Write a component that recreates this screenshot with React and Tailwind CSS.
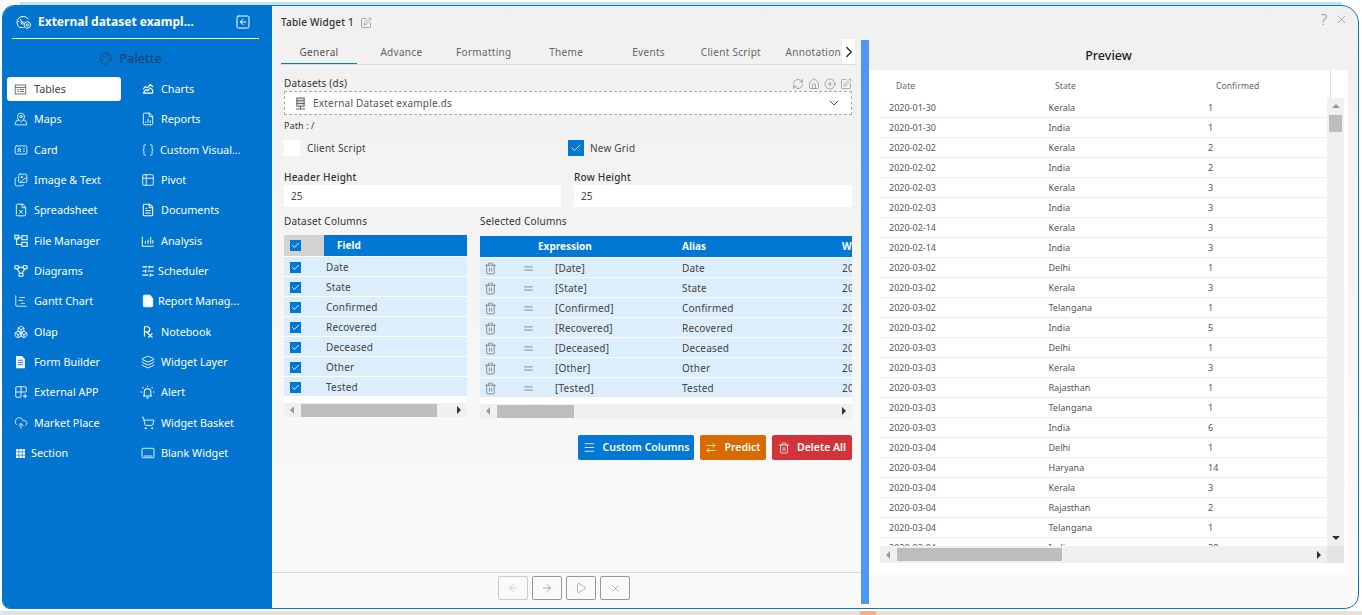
import {
  Boxes, Braces, ChevronDown, ChevronRight, ChartGantt, CloudUpload, FileChartColumn, FileX, FileText,
  Equal, Layers, MapPinned, Menu, Palette, Play, RefreshCw, House, CirclePlus, SquarePen, SquareArrowLeft,
  ArrowLeft, ArrowRight, ArrowRightLeft, Check, Trash2, X, SlidersHorizontal, ShoppingCart,
  Grid2x2Plus, File, IdCard, Images, Table2,
} from "lucide-react";
import { TbPrescription, TbChartAreaLine } from "react-icons/tb";

const FONT = "font-['Noto_Sans',sans-serif]";

const TablesIcon = () => (
  <svg viewBox="0 0 16 16" className="w-[13px] h-[13px]" fill="none" stroke="#555" strokeWidth="1">
    <rect x="1.5" y="2.5" width="13" height="11" />
    <path d="M1.5 5.5h13M4 8h2M4 10.5h2M7.5 8h5M7.5 10.5h5" />
  </svg>
);

const SectionIcon = () => (
  <svg viewBox="0 0 12 12" className="w-[9px] h-[9px]" fill="#fff">
    {[0, 4.3, 8.6].map((y) =>
      [0, 4.3, 8.6].map((x) => <rect key={`${x}-${y}`} x={x} y={y} width="3.4" height="3.4" />)
    )}
  </svg>
);

const BlankIcon = () => (
  <svg viewBox="0 0 16 14" className="w-[14px] h-[12px]" fill="none" stroke="#fff" strokeWidth="1">
    <rect x="1" y="1.5" width="14" height="11" rx="1" />
    <path d="M3 10.5h10" />
  </svg>
);

const GaugeGear = () => (
  <svg viewBox="0 0 20 18" className="w-[17px] h-[16px]" fill="none" stroke="#fff" strokeWidth="1.1">
    <path d="M10 15.5H5.5A7.2 7.2 0 1 1 15.8 6" />
    <path d="M8.5 2v2M3 8.5h2M8.5 9.5 6 5.5" />
    <circle cx="8.5" cy="10" r="1.4" />
    <circle cx="14.5" cy="12.5" r="3.8" />
    <circle cx="14.5" cy="12.5" r="1.3" />
  </svg>
);

const TreeIcon = () => (
  <svg viewBox="0 0 16 16" className="w-[14px] h-[14px]" fill="none" stroke="#fff" strokeWidth="1.2">
    <rect x="1" y="1.5" width="4.5" height="4" />
    <rect x="9" y="2" width="6" height="4.5" />
    <rect x="9" y="9.5" width="6" height="4.5" />
    <path d="M3 5.5v6.5h6M3 4.2h6" />
  </svg>
);

const DiagramIcon = () => (
  <svg viewBox="0 0 16 16" className="w-[14px] h-[14px]" fill="none" stroke="#fff" strokeWidth="1.2">
    <rect x="1" y="2" width="4.5" height="3.5" rx="0.5" />
    <rect x="10.5" y="2" width="4.5" height="3.5" rx="0.5" />
    <rect x="5.8" y="10.5" width="4.5" height="3.5" rx="0.5" />
    <path d="M5.5 3.7h5M3.3 5.5l3.6 5M12.7 5.5l-3.6 5" />
  </svg>
);

const AnalysisIcon = () => (
  <svg viewBox="0 0 16 16" className="w-[14px] h-[14px]" fill="none" stroke="#fff" strokeWidth="1.1">
    <path d="M1.5 3v11h13" />
    <path d="M5 11V8M8 11V6.5M11 11V3.5M13.5 11V7" />
  </svg>
);

const BellIcon = () => (
  <svg viewBox="0 0 16 16" className="w-[15px] h-[15px]" fill="none" stroke="#fff" strokeWidth="1.1">
    <path d="M4.5 11.5V7.5a3.5 3.5 0 0 1 7 0v4M3.2 11.8h9.6M6.6 13.8h2.8" />
    <path d="M8 .7v1.5M2.6 2.4l1 1.1M13.4 2.4l-1 1.1M.6 7.5h1.6M13.8 7.5h1.6" />
  </svg>
);

const FormIcon = () => (
  <svg viewBox="0 0 14 16" className="w-[13px] h-[14px]">
    <path d="M2 1h6.5L12 4.5V15H2z" fill="#fff" />
    <path d="M4 6h6M4 8.5h6M4 11h6" stroke="#0074cf" strokeWidth="1" />
  </svg>
);

const ic = "w-[14px] h-[14px]";
const paletteRows = [
  [["Tables", <TablesIcon />, true], ["Charts", <TbChartAreaLine className={ic} />]],
  [["Maps", <MapPinned className={ic} strokeWidth={1.4} />], ["Reports", <FileChartColumn className={ic} strokeWidth={1.6} />]],
  [["Card", <IdCard className={ic} strokeWidth={1.4} />], ["Custom Visual...", <Braces className={ic} strokeWidth={1.4} />, false, -1]],
  [["Image & Text", <Images className={ic} strokeWidth={1.4} />], ["Pivot", <Table2 className={ic} strokeWidth={1.4} />]],
  [["Spreadsheet", <FileX className={ic} strokeWidth={1.6} />], ["Documents", <FileText className={ic} strokeWidth={1.8} />]],
  [["File Manager", <TreeIcon />], ["Analysis", <AnalysisIcon />]],
  [["Diagrams", <DiagramIcon />], ["Scheduler", <SlidersHorizontal className={ic} strokeWidth={2} />, false, -3]],
  [["Gantt Chart", <ChartGantt className={ic} strokeWidth={1.4} />], ["Report Manag...", <File className={ic} fill="#fff" strokeWidth={1.4} />, false, -3]],
  [["Olap", <Boxes className={ic} strokeWidth={1.5} />], ["Notebook", <TbPrescription className={ic} />]],
  [["Form Builder", <FormIcon />], ["Widget Layer", <Layers className={ic} strokeWidth={1.6} />]],
  [["External APP", <Grid2x2Plus className={ic} strokeWidth={1.5} />], ["Alert", <BellIcon />]],
  [["Market Place", <CloudUpload className={ic} strokeWidth={1.4} />], ["Widget Basket", <ShoppingCart className={ic} strokeWidth={1.5} />]],
  [["Section", <SectionIcon />, false, -3], ["Blank Widget", <BlankIcon />]],
];

const tabs = ["General", "Advance", "Formatting", "Theme", "Events", "Client Script", "Annotation"];
const fields = ["Date", "State", "Confirmed", "Recovered", "Deceased", "Other", "Tested"];

const previewRows = [
  ["2020-01-30", "Kerala", "1"], ["2020-01-30", "India", "1"], ["2020-02-02", "Kerala", "2"], ["2020-02-02", "India", "2"],
  ["2020-02-03", "Kerala", "3"], ["2020-02-03", "India", "3"], ["2020-02-14", "Kerala", "3"], ["2020-02-14", "India", "3"],
  ["2020-03-02", "Delhi", "1"], ["2020-03-02", "Kerala", "3"], ["2020-03-02", "Telangana", "1"], ["2020-03-02", "India", "5"],
  ["2020-03-03", "Delhi", "1"], ["2020-03-03", "Kerala", "3"], ["2020-03-03", "Rajasthan", "1"], ["2020-03-03", "Telangana", "1"],
  ["2020-03-03", "India", "6"], ["2020-03-04", "Delhi", "1"], ["2020-03-04", "Haryana", "14"], ["2020-03-04", "Kerala", "3"],
  ["2020-03-04", "Rajasthan", "2"], ["2020-03-04", "Telangana", "1"], ["2020-03-04", "India", "28"],
];

const PaletteItem = ({ label, icon, active, shift = 0 }) => (
  <div className={`flex items-center h-[24px] rounded-[3px] ${active ? "bg-white text-[#444]" : "text-white"}`}>
    <span className="w-[27px] flex justify-center shrink-0">{icon}</span>
    <span className="text-[10.8px] whitespace-nowrap" style={{ marginLeft: shift }}>{label}</span>
  </div>
);

const Box = ({ checked }) => (
  <span className="w-[11px] h-[11px] bg-[#0078d4] flex items-center justify-center shrink-0">
    {checked && <Check className="w-[9px] h-[9px] text-white" strokeWidth={2.5} />}
  </span>
);

const HScroll = ({ left, thumb, className = "" }) => (
  <div className={`flex items-center h-[14px] bg-[#f0f0f0] ${className}`}>
    <span className="w-0 h-0 ml-[6px] border-y-[4px] border-y-transparent border-r-[4px] border-r-[#999]" style={{ marginRight: left }} />
    <span className="h-[13px] bg-[#bdbdbd]" style={{ width: thumb }} />
    <span className="w-0 h-0 ml-auto mr-[6px] border-y-[4px] border-y-transparent border-l-[4px] border-l-[#333]" />
  </div>
);

export default function App() {
  return (
    <div className={`w-[1362px] h-[615px] overflow-hidden bg-white flex flex-col ${FONT}`}>
      <div className="h-[3px] mt-[2px] mx-[20px] bg-[#bfe3f1] shrink-0" />
      <div className="mx-[2px] w-[1357px] h-[604px] shrink-0 flex overflow-hidden border border-[#0a78bd] rounded-tl-[12px] rounded-tr-[18px] rounded-br-[14px] rounded-bl-[8px] bg-gradient-to-b from-[#f0f0f0] to-[#fafafa]">
        {/* Palette sidebar */}
        <aside className="w-[269px] shrink-0 bg-[#0074cf] px-[4px] flex flex-col">
          <div className="h-[33px] ml-[5px] mr-[9px] border-b border-white flex items-center text-white pl-[3px] pr-[8px]">
            <GaugeGear />
            <span className="ml-[6px] text-[12px] font-bold">External dataset exampl...</span>
            <SquareArrowLeft className="ml-auto w-[16px] h-[16px]" strokeWidth={1.5} />
          </div>
          <div className="h-[34px] mt-[3px] flex items-center justify-center gap-[6px] text-[#163f66] pr-[14px]">
            <Palette className="w-[14px] h-[14px]" strokeWidth={1.2} />
            <span className="text-[13px]">Palette</span>
          </div>
          <div className="mt-[1px] grid grid-cols-[114px_114px] gap-x-[13px] gap-y-[6.35px]">
            {paletteRows.map((row) =>
              row.map(([label, icon, active, shift]) => (
                <PaletteItem key={label} label={label} icon={icon} active={active} shift={shift} />
              ))
            )}
          </div>
        </aside>

        {/* Settings panel */}
        <main className="w-[589px] shrink-0 flex flex-col text-[#444] text-[10px]">
          <div className="h-[33px] pl-[9px] flex items-center gap-[6px] text-[#333] font-medium tracking-[0.2px]">
            Table Widget 1 <SquarePen className="w-[12px] h-[12px] text-[#777]" strokeWidth={1.2} />
          </div>
          <div className="h-[26px] ml-[9px] mr-[6px] flex border-b border-[#d8d8d8] relative overflow-hidden">
            <div className="flex gap-[6.4px] tracking-[0.3px]">
              {tabs.map((t, i) => (
                <div key={t} className={`w-[76px] shrink-0 flex items-center justify-center text-center pt-[2px] ${i === 0 ? "border-b-2 border-[#0078d4] text-[#555] h-[26px]" : "text-[#666]"}`}>{t}</div>
              ))}
            </div>
            <div className="absolute right-0 top-0 w-[13px] h-[26px] bg-white flex items-center justify-center">
              <ChevronRight className="w-[18px] h-[18px] shrink-0 text-[#333]" strokeWidth={2} />
            </div>
          </div>

          <div className="pl-[12px] pr-[9px] flex flex-col">
            <div className="h-[26px] flex items-end justify-between">
              <span className="text-[#333] tracking-[0.2px]">Datasets (ds)</span>
              <span className="flex gap-[4px] text-[#777] pb-[1px]">
                <RefreshCw className="w-[12px] h-[12px]" strokeWidth={1.2} />
                <House className="w-[12px] h-[12px]" strokeWidth={1.2} />
                <CirclePlus className="w-[12px] h-[12px]" strokeWidth={1.2} />
                <SquarePen className="w-[12px] h-[12px]" strokeWidth={1.2} />
              </span>
            </div>
            <div className="h-[24px] bg-white border border-dashed border-[#aaa] flex items-center pl-[10px] pr-[9px]">
              <svg viewBox="0 0 12 14" className="w-[11px] h-[13px]" fill="none" stroke="#555" strokeWidth="1">
                <rect x="2" y="1" width="8" height="9" fill="#ddd" />
                <path d="M2 4h8M2 7h8M6 10v3M1 13h10" />
              </svg>
              <span className="ml-[7px] tracking-[0.2px] text-[#555]">External Dataset example.ds</span>
              <ChevronDown className="ml-auto w-[16px] h-[16px] text-[#555]" strokeWidth={1.5} />
            </div>
            <div className="h-[21px] flex items-center text-[9px] text-[#333] tracking-[0.1px]">Path : /</div>
            <div className="h-[24px] flex items-center">
              <span className="w-[16px] h-[16px] bg-white" />
              <span className="ml-[7px] w-[261px] tracking-[0.2px]">Client Script</span>
              <span className="w-[16px] h-[16px] bg-[#0078d4] flex items-center justify-center">
                <Check className="w-[12px] h-[12px] text-white" strokeWidth={1.5} />
              </span>
              <span className="ml-[6px] tracking-[0.2px]">New Grid</span>
            </div>
            <div className="flex mt-[10px] gap-[13px]">
              <div className="w-[277px]">
                <div className="h-[15px] text-[#333] tracking-[0.2px] font-medium">Header Height</div>
                <div className="h-[22px] bg-white pl-[7px] pt-[1px] flex items-center">25</div>
              </div>
              <div className="w-[278px]">
                <div className="h-[15px] text-[#333] tracking-[0.2px] font-medium">Row Height</div>
                <div className="h-[22px] bg-white pl-[7px] pt-[1px] flex items-center">25</div>
              </div>
            </div>

            <div className="flex mt-[4px] gap-[13px]">
              {/* Dataset columns */}
              <div className="w-[183px] shrink-0">
                <div className="h-[20px] text-[#333] tracking-[0.2px] flex items-center">Dataset Columns</div>
                <div className="mt-[4px] h-[21px] flex">
                  <div className="w-[40px] bg-[#d3d3d3] pl-[6px] flex items-center"><Box checked /></div>
                  <div className="flex-1 bg-[#0078d4] text-white font-bold pl-[13px] flex items-center">Field</div>
                </div>
                {fields.map((f) => (
                  <div key={f} className="h-[20px] bg-[#dcedfb] border-t border-white flex items-center pl-[6px] pt-[1px] tracking-[0.2px]">
                    <Box checked />
                    <span className="ml-[25px]">{f}</span>
                  </div>
                ))}
                <div className="h-[7px] bg-white" />
                <HScroll left={7} thumb={136} />
              </div>

              {/* Selected columns */}
              <div className="w-[372px] overflow-hidden">
                <div className="h-[20px] text-[#333] tracking-[0.2px] flex items-center">Selected Columns</div>
                <div className="mt-[5px] h-[21px] flex items-center bg-[#0078d4] text-white font-bold">
                  <span className="w-[58px] shrink-0" />
                  <span className="w-[144px] shrink-0">Expression</span>
                  <span className="w-[160px] shrink-0">Alias</span>
                  <span className="shrink-0">Wi</span>
                </div>
                {fields.map((f) => (
                  <div key={f} className="h-[20px] bg-[#dcedfb] border-t border-white flex items-center pt-[1px] tracking-[0.2px]">
                    <span className="w-[20px] shrink-0 flex justify-center"><Trash2 className="w-[13px] h-[13px] text-[#777]" strokeWidth={1.5} /></span>
                    <span className="w-[38px] shrink-0 flex justify-center pl-[18px]"><Equal className="w-[13px] h-[13px] text-[#777]" strokeWidth={1.5} /></span>
                    <span className="w-[17px] shrink-0" />
                    <span className="w-[127px] shrink-0">[{f}]</span>
                    <span className="w-[160px] shrink-0">{f}</span>
                    <span className="shrink-0">20</span>
                  </div>
                ))}
                <div className="h-[7px] bg-white" />
                <HScroll left={7} thumb={77} />
              </div>
            </div>

            <div className="flex justify-end mt-[16px] pt-[1px] gap-[6px] text-white text-[10.5px] font-semibold">
              <div className="w-[116px] h-[25px] bg-[#0078d4] rounded-[2px] flex items-center justify-center gap-[7px]">
                <Menu className="w-[13px] h-[13px]" strokeWidth={1.5} /> Custom Columns
              </div>
              <div className="w-[66px] h-[25px] bg-[#d96a00] rounded-[2px] flex items-center justify-center gap-[7px]">
                <ArrowRightLeft className="w-[12px] h-[12px]" strokeWidth={1.5} /> Predict
              </div>
              <div className="w-[80px] h-[25px] bg-[#d13438] rounded-[2px] flex items-center justify-center gap-[7px]">
                <Trash2 className="w-[12px] h-[12px]" strokeWidth={1.5} /> Delete All
              </div>
            </div>
          </div>

          <div className="mt-auto h-[36px] border-t border-[#d8d8d8] flex items-start pt-[3px] pl-[226px] gap-[4px] text-[#777]">
            <span className="w-[30px] h-[24px] border border-[#ccc] rounded-[2px] flex items-center justify-center text-[#bbb]"><ArrowLeft className="w-[12px] h-[12px]" strokeWidth={1.2} /></span>
            <span className="w-[30px] h-[24px] border border-[#999] rounded-[2px] flex items-center justify-center"><ArrowRight className="w-[12px] h-[12px]" strokeWidth={1.2} /></span>
            <span className="w-[30px] h-[24px] border border-[#999] rounded-[2px] flex items-center justify-center"><Play className="w-[12px] h-[12px]" strokeWidth={1} /></span>
            <span className="w-[30px] h-[24px] border border-[#999] rounded-[2px] flex items-center justify-center"><X className="w-[11px] h-[11px]" strokeWidth={1.2} /></span>
          </div>
        </main>

        {/* Splitter */}
        <div className="w-[8px] shrink-0 mt-[34px] mb-[4px] bg-[#4f97f5]" />

        {/* Preview */}
        <section className="flex-1 min-w-0 flex flex-col relative">
          <div className="h-[64px] relative flex items-end justify-center pb-[4px] pr-[10px] text-[12.5px] font-medium text-[#222]">
            Preview
            <span className="absolute right-[10px] top-[6px] flex items-center gap-[8px] text-[#888]">
              <span className="text-[15px] font-light leading-none">?</span>
              <X className="w-[13px] h-[13px]" strokeWidth={1.2} />
            </span>
          </div>
          <div className="w-[479px] h-[505px] bg-white pl-[11px] text-[8.5px] text-[#555] flex flex-col">
            <div className="h-[28px] w-[451px] flex items-center shrink-0 border-r border-[#ddd] text-[#666] pt-[4px] tracking-[0.1px]">
              <span className="w-[159px] pl-[16px]">Date</span>
              <span className="w-[162px] pl-[16px]">State</span>
              <span className="pl-[15px]">Confirmed</span>
            </div>
            <div className="h-[448px] flex overflow-hidden shrink-0">
              <div className="w-[447px] shrink-0">
                {previewRows.map((r, i) => (
                  <div key={i} className="h-[20px] flex items-center border-b border-[#ececec] text-[9px] shrink-0">
                    <span className="w-[159.5px] pl-[9px]">{r[0]}</span>
                    <span className="w-[159.5px] pl-[9px]">{r[1]}</span>
                    <span className="pl-[9px]">{r[2]}</span>
                  </div>
                ))}
              </div>
              <div className="w-[17px] shrink-0 bg-[#f0f0f0] flex flex-col items-center pt-[6px]">
                <span className="w-0 h-0 border-x-[4px] border-x-transparent border-b-[4px] border-b-[#999]" />
                <span className="w-[13px] h-[17px] mt-[7px] bg-[#bdbdbd]" />
                <span className="w-0 h-0 mt-auto mb-[6px] border-x-[4px] border-x-transparent border-t-[4px] border-t-[#333]" />
              </div>
            </div>
            <div className="w-[464px] flex shrink-0">
              <HScroll left={7} thumb={165} className="flex-1 h-[17px]" />
              <span className="w-[17px] bg-[#e4e4e4]" />
            </div>
          </div>
        </section>
      </div>
      <div className="mt-[2px] h-[4px] flex bg-[#e2e2e2] shrink-0">
        <span className="w-[860px]" />
        <span className="w-[16px] bg-[#f4b183]" />
        <span className="flex-1 bg-[#e6e2da]" />
      </div>
    </div>
  );
}
